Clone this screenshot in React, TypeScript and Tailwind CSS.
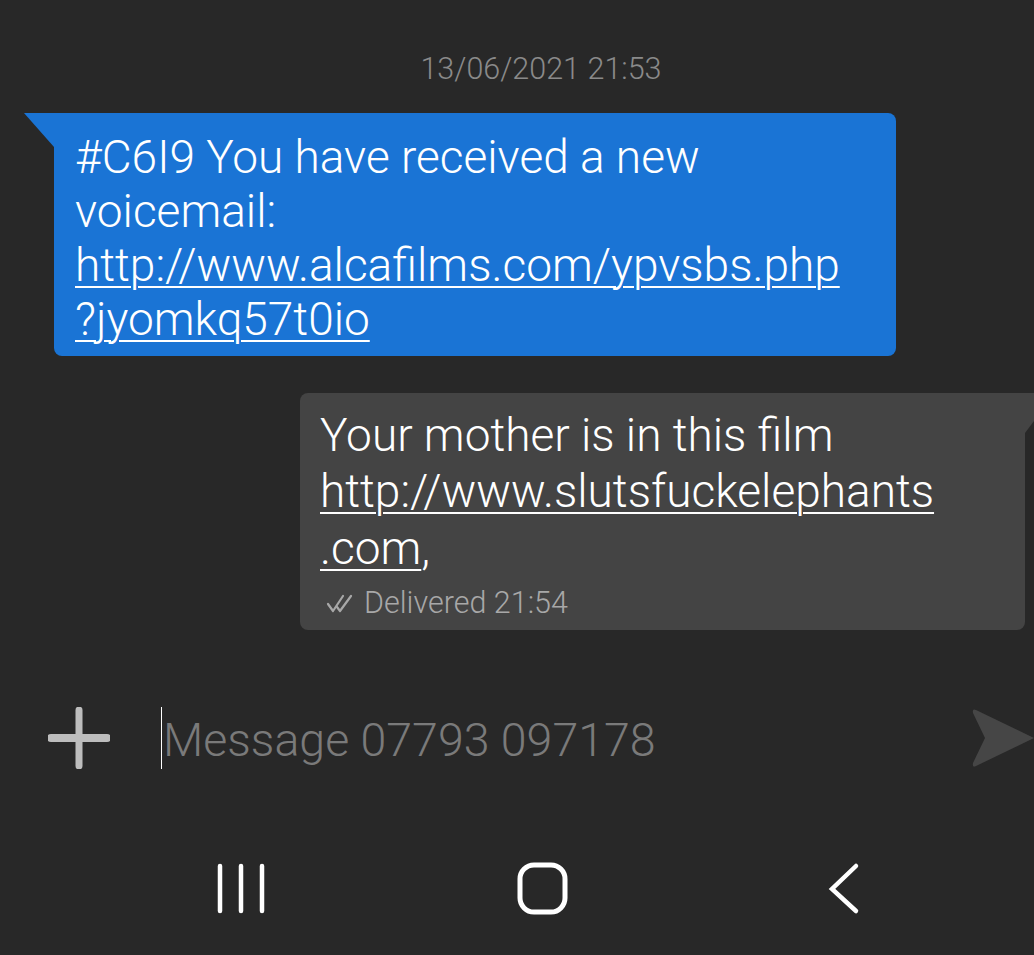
import React from "react";

export default function App() {
  const font = { fontFamily: "Roboto, 'Noto Sans', sans-serif" };
  return (
    <div className="w-[1034px] h-[955px] bg-[#282828] overflow-hidden flex flex-col" style={font}>
      <div className="h-[46px]" />
      <div className="text-center text-[30.5px] leading-[46px] text-[#8a8a8a] font-light pl-[48px]">13/06/2021 21:53</div>
      <div className="h-[21px]" />
      {/* incoming */}
      <div className="flex">
        <div className="w-[24px]" />
        <svg width="30" height="34" viewBox="0 0 30 34" className="shrink-0"><polygon points="0,0 30,0 30,34" fill="#1a74d5" /></svg>
        <div className="w-[842px] h-[243px] bg-[#1a74d5] rounded-tr-[8px] rounded-b-[8px] pl-[21px] pt-[17px] text-white text-[46px] leading-[54px] font-light">
          <div>#C6I9 You have received a new</div>
          <div>voicemail:</div>
          <div className="underline decoration-[2px] underline-offset-[5px]">http://www.alcafilms.com/ypvsbs.php</div>
          <div className="underline decoration-[2px] underline-offset-[5px]">?jyomkq57t0io</div>
        </div>
      </div>
      <div className="h-[37px]" />
      {/* outgoing */}
      <div className="flex justify-end">
        <div className="w-[725px] h-[237px] bg-[#444444] rounded-l-[8px] rounded-br-[8px] pl-[20px] pt-[14px] text-white font-light">
          <div className="text-[46px] leading-[56px]">Your mother is in this film</div>
          <div className="text-[46px] leading-[56px] underline decoration-[2px] underline-offset-[5px]">http://www.slutsfuckelephants</div>
          <div className="text-[46px] leading-[58px]"><span className="underline decoration-[2px] underline-offset-[5px]">.com</span>,</div>
          <div className="flex items-center gap-[8px] text-[30.5px] leading-[40px] text-[#a8a8a8] mt-[6px] pl-[6px]">
            <svg width="30" height="20" viewBox="0 0 30 20" fill="none" stroke="#a8a8a8" strokeWidth="2.2" strokeLinecap="round" strokeLinejoin="round">
              <polyline points="2,11 7,18 17,3" />
              <polyline points="11,14 14,18 25,3" />
            </svg>
            <span>Delivered 21:54</span>
          </div>
        </div>
        <svg width="9" height="40" viewBox="0 0 9 40" className="shrink-0"><polygon points="0,0 9,0 9,28 0,40" fill="#444444" /></svg>
      </div>
      <div className="h-[76px]" />
      {/* input */}
      <div className="flex items-center h-[64px]">
        <div className="w-[48px]" />
        <svg width="62" height="62" viewBox="0 0 62 62" className="shrink-0">
          <line x1="31" y1="3" x2="31" y2="59" stroke="#bdbdbd" strokeWidth="7" strokeLinecap="round" />
          <line x1="3" y1="31" x2="59" y2="31" stroke="#bdbdbd" strokeWidth="8" strokeLinecap="round" />
        </svg>
        <div className="w-[51px]" />
        <div className="w-[1px] h-[62px] bg-white" />
        <div className="text-[46.5px] leading-[60px] text-[#7a7a7a] font-light pl-[1px] pt-[4px]">Message 07793 097178</div>
        <div className="flex-1" />
        <svg width="62" height="60" viewBox="0 0 62 60" className="shrink-0">
          <path d="M4 2 Q0 0 1 5 L13 30 L1 55 Q0 60 4 58 L62 30 Z" fill="#464646" />
        </svg>
      </div>
      <div className="h-[92px]" />
      {/* nav */}
      <div className="flex items-center h-[54px]">
        <svg width="1034" height="54" viewBox="0 0 1034 54">
          <g stroke="#ffffff" strokeWidth="4.5" strokeLinecap="round" fill="none">
            <line x1="220" y1="4" x2="220" y2="49" />
            <line x1="241" y1="4" x2="241" y2="49" />
            <line x1="262" y1="4" x2="262" y2="49" />
            <rect x="520" y="3" width="45" height="47" rx="14" strokeWidth="5" />
            <polyline points="856,4 832,27 856,49" />
          </g>
        </svg>
      </div>
    </div>
  );
}
